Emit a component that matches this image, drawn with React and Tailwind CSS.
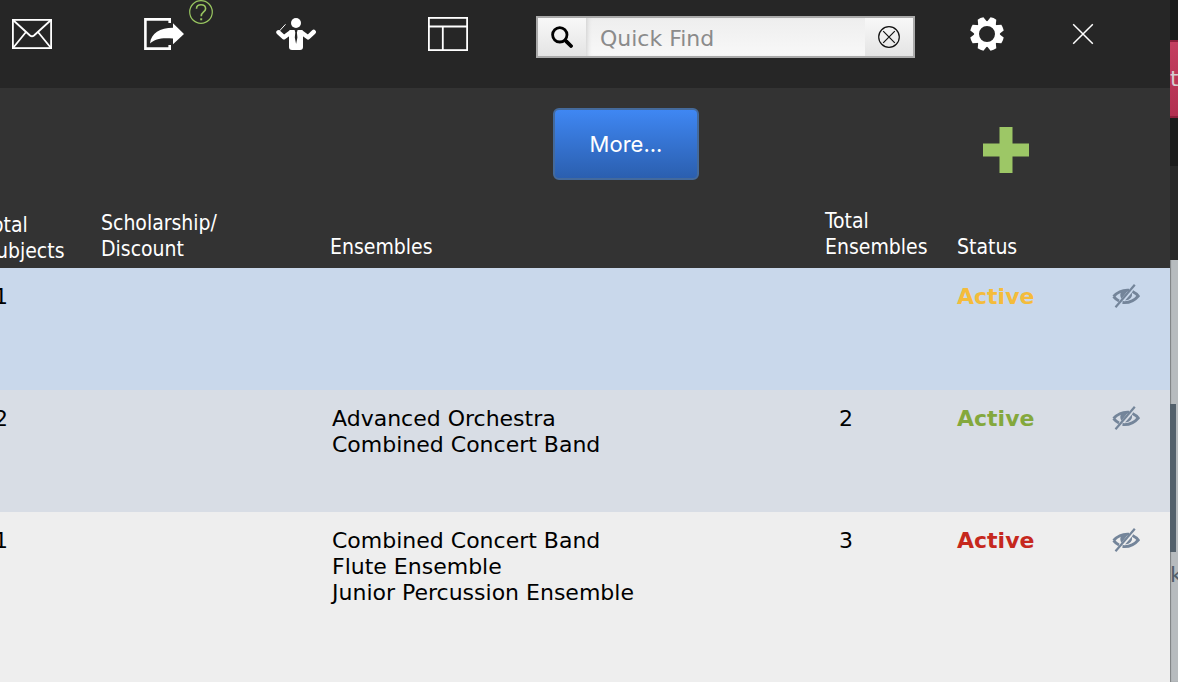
import React, { useState } from "react";

const ROWS = [
  {
    id: 1,
    subjects: "1",
    ensembles: [],
    total: "",
    rowBg: "bg-[#c9d8eb]",
    statusColor: "text-[#f4bc3b]",
  },
  {
    id: 2,
    subjects: "2",
    ensembles: ["Advanced Orchestra", "Combined Concert Band"],
    total: "2",
    rowBg: "bg-[#d8dde5]",
    statusColor: "text-[#84a83c]",
  },
  {
    id: 3,
    subjects: "1",
    ensembles: ["Combined Concert Band", "Flute Ensemble", "Junior Percussion Ensemble"],
    total: "3",
    rowBg: "bg-[#eeeeee]",
    statusColor: "text-[#c6281d]",
  },
];

const GEAR_TEETH = [22.5, 67.5, 112.5, 157.5, 202.5, 247.5, 292.5, 337.5];

function MailIcon() {
  return (
    <svg width="40" height="30" viewBox="0 0 40 30" fill="none" stroke="#fff" strokeWidth="1.8">
      <rect x="0.9" y="0.9" width="38.2" height="28.2" />
      <path d="M1 1l17 15.5q2 1.6 4 0L39 1M1 29l13-16M39 29L26 13" />
    </svg>
  );
}

function ShareIcon() {
  return (
    <svg width="40" height="32" viewBox="0 0 40 32">
      <path d="M25.7 5V1.4H1.4v29.2H25.7V27" fill="none" stroke="#fff" strokeWidth="2.6" />
      <path d="M6 25.5C7 15 16 10 29 9.7V5.3L40 16L29 26.3V20.5C18 19.5 11 20.5 6 25.5z" fill="#fff" />
    </svg>
  );
}

function HelpIcon() {
  return (
    <svg width="24" height="24" viewBox="0 0 24 24" fill="none" stroke="#98c560">
      <circle cx="12" cy="12" r="11.3" strokeWidth="1.2" />
      <path d="M7.5 8.8C7.5 6 9.3 4.7 12 4.7S16.6 6.3 16.6 8.7C16.6 12 12.2 12 12.2 16.2" strokeWidth="1.6" />
      <path d="M12.2 18.3v2" strokeWidth="2" />
    </svg>
  );
}

function ConductorIcon() {
  return (
    <svg width="40" height="32" viewBox="0 0 40 32">
      <circle cx="20" cy="5" r="5" fill="#fff" />
      <path d="M2.5 14L9.5 6.3" stroke="#fff" strokeWidth="1" />
      <path d="M2.5 14.3L8 19.3L14.5 14.5M37.7 14L32 19.3L25.5 14.5" fill="none" stroke="#fff" strokeWidth="4.5" strokeLinecap="round" strokeLinejoin="round" />
      <path d="M14.5 12h11q1.5 0 1.5 2v15q0 3-3 3h-8q-3 0-3-3V14q0-2 1.5-2z" fill="#fff" />
      <path d="M18.6 12h3l-.7 2.5.5 5-1.3 6.5-1.3-6.5.5-5z" fill="#262626" />
    </svg>
  );
}

function LayoutIcon() {
  return (
    <svg width="40" height="34" viewBox="0 0 40 34" fill="none" stroke="#fff" strokeWidth="1.8">
      <rect x="0.9" y="0.9" width="38.2" height="32.2" />
      <path d="M1 9.5h38M14.8 9.5v23.5" />
    </svg>
  );
}

function SearchIcon() {
  return (
    <svg width="22" height="22" viewBox="0 0 22 22" fill="none" stroke="#000">
      <circle cx="8.8" cy="8.8" r="7.2" strokeWidth="2.8" />
      <path d="M13.8 13.8l2 2" strokeWidth="2.8" />
      <path d="M15.3 15.3l4.7 4.7" strokeWidth="3.8" strokeLinecap="round" />
    </svg>
  );
}

function ClearIcon() {
  return (
    <svg width="22" height="22" viewBox="0 0 22 22" fill="none" stroke="#111" strokeWidth="1.2">
      <circle cx="11" cy="11" r="10.3" />
      <path d="M5.2 5.2l11.6 11.6M16.8 5.2L5.2 16.8" />
    </svg>
  );
}

function GearIcon() {
  return (
    <svg width="34" height="34" viewBox="-17 -17 34 34">
      <circle r="10.4" fill="none" stroke="#fff" strokeWidth="4.8" />
      {GEAR_TEETH.map((a) => (
        <path key={a} d="M-4.8-11L-4.2-13.2L-3.1-16.8Q0-17.5 3.1-16.8L4.2-13.2L4.8-11z" fill="#fff" transform={`rotate(${a})`} />
      ))}
    </svg>
  );
}

function CloseIcon() {
  return (
    <svg width="22" height="22" viewBox="0 0 22 22" stroke="#fff" strokeWidth="1.5">
      <path d="M1.2 1.2l19.6 19.6M20.8 1.2L1.2 20.8" />
    </svg>
  );
}

function HiddenIcon() {
  return (
    <svg width="28" height="24" viewBox="0 0 28 24" fill="none" stroke="#74859a">
      <path d="M1.5 12.5Q8 5.5 17 6.2M1.5 12.5Q4 15.5 7 17" strokeWidth="2.8" />
      <path d="M20.5 7.5Q24.5 9.5 26.3 12Q20 19.5 10.5 18.5" strokeWidth="2.8" />
      <path d="M9.5 7Q7 11 9.5 14.8L16 6.5z" fill="#74859a" stroke="none" />
      <path d="M20 8.5Q21 15.5 13 16.5z" fill="#74859a" stroke="none" />
      <path d="M3.5 23.2L22.8 0.8" strokeWidth="2.2" />
    </svg>
  );
}

function Toolbar() {
  const [query, setQuery] = useState("");

  return (
    <header className="flex h-[88px] items-start bg-[#262626] pl-3 pr-[76px]">
      <div className="flex h-[68px] min-w-0 flex-1 items-center">
        <button aria-label="Email">
          <MailIcon />
        </button>
        <div className="relative ml-[92px]">
          <button aria-label="Export" className="block">
            <ShareIcon />
          </button>
          <button aria-label="Help" className="absolute -top-[18px] left-[45px]">
            <HelpIcon />
          </button>
        </div>
        <button aria-label="Conductor" className="ml-[92px]">
          <ConductorIcon />
        </button>
        <button aria-label="Layout" className="ml-28">
          <LayoutIcon />
        </button>
        <div className="ml-[68px] mt-1.5 flex h-[42px] min-w-0 flex-1 border-2 border-[#aaaaaa] bg-[#f4f4f4]">
          <button
            aria-label="Search"
            className="flex w-12 shrink-0 items-center justify-center bg-linear-to-b from-[#f8f8f8] to-[#e4e4e4]"
          >
            <SearchIcon />
          </button>
          <input
            type="text"
            aria-label="Quick Find"
            placeholder="Quick Find"
            value={query}
            onChange={(e) => setQuery(e.target.value)}
            className="min-w-0 flex-1 bg-linear-to-b from-[#eeeeee] to-[#f8f8f8] px-3.5 pt-0.5 text-[22px] text-black shadow-[inset_4px_0_5px_-3px_#cccccc] outline-none placeholder:text-[#8b8b8b]"
          />
          <button
            aria-label="Clear"
            onClick={() => setQuery("")}
            className="flex w-12 shrink-0 items-center justify-center bg-linear-to-b from-[#f8f8f8] to-[#e4e4e4]"
          >
            <ClearIcon />
          </button>
        </div>
        <button aria-label="Settings" className="ml-[55px]">
          <GearIcon />
        </button>
        <button aria-label="Close" className="ml-[68px]">
          <CloseIcon />
        </button>
      </div>
    </header>
  );
}

function ActionBar() {
  return (
    <div className="flex h-28 items-center justify-end bg-[#333333] pr-[141px]">
      <button className="h-[72px] w-[146px] rounded-md border-2 border-[#446a9c] bg-linear-to-b from-[#3f87f3] to-[#2b5faf] font-['Inter',sans-serif] text-[22px] text-white">
        More...
      </button>
      <button aria-label="Add" className="ml-[284px] mt-3">
        <svg width="46" height="46" viewBox="0 0 46 46">
          <path d="M16.5 0h13v16.5H46v13H29.5V46h-13V29.5H0v-13h16.5z" fill="#9dc766" />
        </svg>
      </button>
    </div>
  );
}

function StudentRow({ r }) {
  return (
    <tr className={`h-[122px] align-top ${r.rowBg}`}>
      <td className="pt-4 pl-2.5">{r.subjects}</td>
      <td />
      <td className="pt-4 pl-0.5">
        {r.ensembles.map((name) => (
          <div key={name}>{name}</div>
        ))}
      </td>
      <td className="pt-4 pl-3.5">{r.total}</td>
      <td className={`pt-4 font-bold ${r.statusColor}`}>Active</td>
      <td className="pt-4 pl-[22px]">
        <button aria-label="Hide student" className="block">
          <HiddenIcon />
        </button>
      </td>
    </tr>
  );
}

function StudentTable() {
  return (
    <div className="overflow-hidden">
      <table className="-ml-4 w-[calc(100%+16px)] table-fixed border-collapse text-[22px] leading-[26px] text-black">
        <colgroup>
          <col className="w-[117px]" />
          <col className="w-[229px]" />
          <col />
          <col className="w-[132px]" />
          <col className="w-[133px]" />
          <col className="w-20" />
        </colgroup>
        <thead>
          <tr className="h-[68px] bg-[#333333] text-left align-bottom font-['DejaVu_Sans_Condensed','DejaVu_Sans',sans-serif] text-[21px] text-white">
            <th className="pb-1 font-normal">
              Total
              <br />
              Subjects
            </th>
            <th className="pb-1.5 font-normal">
              Scholarship/
              <br />
              Discount
            </th>
            <th className="pb-2 font-normal">Ensembles</th>
            <th className="pb-2 font-normal">
              Total
              <br />
              Ensembles
            </th>
            <th className="pb-2 font-normal">Status</th>
            <th aria-label="Visibility" />
          </tr>
        </thead>
        <tbody>
          {ROWS.map((r) => (
            <StudentRow key={r.id} r={r} />
          ))}
        </tbody>
      </table>
    </div>
  );
}

// Sliver of the window that sits behind the dialog
function BackgroundEdge() {
  return (
    <aside className="flex w-2 shrink-0 flex-col overflow-hidden bg-[#b7bbbe] text-[22px] leading-[26px] shadow-[inset_1px_0_1px_#00000050]">
      <div className="h-10 shrink-0 bg-[#1c1c1c]" />
      <div className="flex h-[78px] shrink-0 items-center border-y-2 border-[#8c1f3b] bg-linear-to-b from-[#c43f60] to-[#b22f50] text-[#d6ccd0]">
        t
      </div>
      <div className="h-12 shrink-0 bg-[#1c1c1c]" />
      <div className="h-[94px] shrink-0 bg-[#282828]" />
      <div className="mt-36 h-[148px] w-1.5 shrink-0 bg-[#53606b]" />
      <div className="mt-2.5 text-[#53606b]">k</div>
    </aside>
  );
}

export default function App() {
  return (
    <div className="flex min-h-screen font-['DejaVu_Sans',Verdana,sans-serif]">
      <main className="min-w-0 flex-1 bg-[#eeeeee]">
        <Toolbar />
        <ActionBar />
        <StudentTable />
      </main>
      <BackgroundEdge />
    </div>
  );
}
